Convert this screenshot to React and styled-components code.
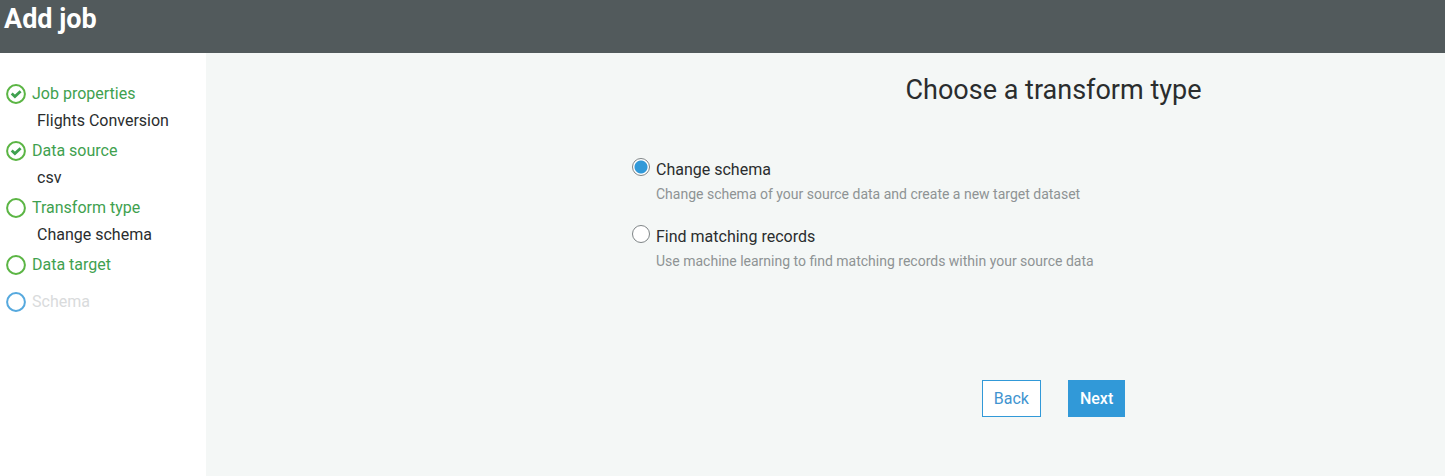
import React, { useState } from 'react';
import styled, { createGlobalStyle } from 'styled-components';

const GlobalStyle = createGlobalStyle`
    * {
        box-sizing: border-box;
    }

    body {
        margin: 0;
        background: #f4f7f6;
        color: #2a2d2e;
        font: 16px/20px Roboto, sans-serif;
    }
`;

const Page = styled.div`
    display: flex;
    flex-direction: column;
    min-height: 100vh;
`;

const Header = styled.header`
    height: 53px;
    padding: 3px 4px;
    background: #525a5c;
`;

const HeaderTitle = styled.h1`
    margin: 0;
    color: #fff;
    font-size: 27px;
    font-weight: bold;
    line-height: 32px;
`;

const Body = styled.div`
    display: flex;
    flex: 1;
`;

const Sidebar = styled.nav`
    flex: 0 0 206px;
    padding: 30px 6px;
    background: #fff;
`;

const StepList = styled.ol`
    margin: 0;
    padding: 0;
    list-style: none;
`;

const StepItem = styled.li`
    margin-bottom: 9px;
`;

const StepLabel = styled.div`
    display: flex;
    align-items: flex-start;
    gap: 6px;
    padding-bottom: 6px;
    color: ${props => (props.$pending ? '#d9dbdc' : '#3fa14f')};
    line-height: 22px;
`;

const StepValue = styled.div`
    padding-left: 31px;
`;

const StepSvg = styled.svg`
    flex: none;
    margin-top: 1px;
`;

const Main = styled.main`
    flex: 1;
    padding: 21px 0 40px 426px;
`;

const Centered = styled.div`
    display: flex;
    justify-content: center;
    gap: 27px;
    padding-left: 30px;
`;

const Title = styled.h2`
    margin: 0;
    font-size: 27px;
    font-weight: normal;
    line-height: 32px;
`;

const Options = styled.div`
    display: flex;
    flex-direction: column;
    gap: 21px;
    padding: 52px 0 109px;
`;

const Option = styled.div`
    display: grid;
    grid-template-columns: 18px auto;
    column-gap: 6px;
    justify-content: start;
`;

const Radio = styled.input`
    appearance: none;
    width: 18px;
    height: 18px;
    margin: 0;
    border: 1px solid #7f8587;
    border-radius: 50%;
    background: #fff;

    &:checked {
        background: radial-gradient(circle, #3199d8 6px, #fff 7px);
    }
`;

const OptionLabel = styled.label`
    padding-top: 2px;
    line-height: 20px;
`;

const OptionHint = styled.div`
    grid-column: 2;
    padding-top: 4px;
    color: #8e9394;
    font-size: 14px;
`;

const Button = styled.button`
    height: 37px;
    padding: 0 11px;
    border: 1px solid #3199d8;
    background: ${props => (props.$primary ? '#3199d8' : '#fff')};
    color: ${props => (props.$primary ? '#fff' : '#3f94d0')};
    font: inherit;
    font-weight: ${props => (props.$primary ? 500 : 400)};
`;

const STEPS = [
  { name: 'Job properties', value: 'Flights Conversion', done: true },
  { name: 'Data source', value: 'csv', done: true },
  { name: 'Transform type', value: 'Change schema' },
  { name: 'Data target' },
  { name: 'Schema', pending: true },
];

const TRANSFORMS = [
  {
    id: 'change-schema',
    label: 'Change schema',
    hint: 'Change schema of your source data and create a new target dataset',
  },
  {
    id: 'find-matching',
    label: 'Find matching records',
    hint: 'Use machine learning to find matching records within your source data',
  },
];

function StepIcon(props) {
  const { done, pending } = props;
  return (
    <StepSvg width="20" height="20" viewBox="0 0 20 20" fill="none" aria-hidden="true">
      <circle cx="10" cy="10" r="8.9" stroke={pending ? '#56a9de' : '#5bb544'} strokeWidth="2" />
      {done && <path d="M5.7 9.6 L8.9 12.6 L14.6 7.2" stroke="#3fa14f" strokeWidth="2.8" />}
    </StepSvg>
  );
}

function Steps() {
  return (
    <StepList>
      {STEPS.map(step => (
        <StepItem key={step.name}>
          <StepLabel $pending={step.pending}>
            <StepIcon done={step.done} pending={step.pending} />
            {step.name}
          </StepLabel>
          {step.value && <StepValue>{step.value}</StepValue>}
        </StepItem>
      ))}
    </StepList>
  );
}

function App() {
  const [selected, setSelected] = useState('change-schema');

  return (
    <Page>
      <GlobalStyle />
      <Header>
        <HeaderTitle>Add job</HeaderTitle>
      </Header>
      <Body>
        <Sidebar>
          <Steps />
        </Sidebar>
        <Main>
          <Centered>
            <Title>Choose a transform type</Title>
          </Centered>
          <Options>
            {TRANSFORMS.map(item => (
              <Option key={item.id}>
                <Radio
                  type="radio"
                  name="transform"
                  id={item.id}
                  aria-describedby={`${item.id}-hint`}
                  checked={selected === item.id}
                  onChange={() => setSelected(item.id)}
                />
                <OptionLabel htmlFor={item.id}>{item.label}</OptionLabel>
                <OptionHint id={`${item.id}-hint`}>{item.hint}</OptionHint>
              </Option>
            ))}
          </Options>
          <Centered>
            <Button type="button">Back</Button>
            <Button type="button" $primary>Next</Button>
          </Centered>
        </Main>
      </Body>
    </Page>
  );
}

export default App;
